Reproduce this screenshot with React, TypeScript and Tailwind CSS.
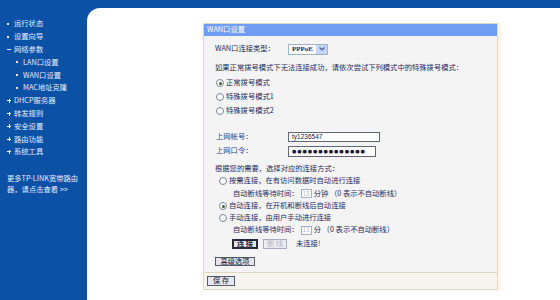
import type { ReactNode } from 'react';

const menu: { label: string; mark: 'dot' | 'minus' | 'plus'; sub?: boolean }[] = [
  { label: '运行状态', mark: 'dot' },
  { label: '设置向导', mark: 'dot' },
  { label: '网络参数', mark: 'minus' },
  { label: 'LAN口设置', mark: 'dot', sub: true },
  { label: 'WAN口设置', mark: 'dot', sub: true },
  { label: 'MAC地址克隆', mark: 'dot', sub: true },
  { label: 'DHCP服务器', mark: 'plus' },
  { label: '转发规则', mark: 'plus' },
  { label: '安全设置', mark: 'plus' },
  { label: '路由功能', mark: 'plus' },
  { label: '系统工具', mark: 'plus' },
];

function Mark({ kind }: { kind: 'dot' | 'minus' | 'plus' }) {
  if (kind === 'dot') return <span className="h-[2px] w-[2px] bg-[#dfe8ff]" />;
  if (kind === 'minus') return <span className="h-[1px] w-[4px] bg-[#dfe8ff]" />;
  return (
    <span className="relative h-[4px] w-[4px]">
      <span className="absolute left-0 top-[1.5px] h-[1px] w-[4px] bg-[#eef3ff]" />
      <span className="absolute left-[1.5px] top-0 h-[4px] w-[1px] bg-[#eef3ff]" />
    </span>
  );
}

function Sidebar() {
  return (
    <aside className="flex w-[87px] shrink-0 flex-col pt-[9.6px] text-[#e4ecff]">
      {menu.map((m) => (
        <div key={m.label} className={`flex h-[12.8px] items-center ${m.sub ? 'pl-[16px]' : 'pl-[7px]'}`}>
          <span className="flex w-[7px] items-center">
            <Mark kind={m.mark} />
          </span>
          <span>{m.label}</span>
        </div>
      ))}
      <div className="mt-[15px] pl-[7px] leading-[11px]">
        <div>更多TP-LINK宽带路由</div>
        <div>器，请点击查看 &gt;&gt;</div>
      </div>
    </aside>
  );
}

function Radio({ checked }: { checked?: boolean }) {
  return (
    <span className="mr-[2px] inline-flex h-[8px] w-[8px] shrink-0 items-center justify-center rounded-full border border-[#7b8494] bg-white">
      {checked && <span className="h-[3px] w-[3px] rounded-full bg-[#3d5a2e]" />}
    </span>
  );
}

function Btn({ children, className }: { children: ReactNode; className: string }) {
  return <span className={`inline-flex items-center justify-center ${className}`}>{children}</span>;
}

function SmallInput() {
  return (
    <span className="mx-[2px] inline-flex h-[9px] w-[11px] items-center justify-center border border-[#9fb2c8] bg-white text-[6px] text-[#b0b8c4]">
      15
    </span>
  );
}

function FormBox() {
  return (
    <div className="w-[295px] border border-[#e2d8c2] bg-[#f4f4f4] text-[#1e2a5e] shadow-[3px_0_0_#fbf6e6]">
      <div className="flex h-[12px] items-center bg-[#6f9df3] pl-[3px] text-white">WAN口设置</div>
      <div className="flex flex-col pl-[11px]">
        <div className="mt-[7px] flex h-[12px] items-center">
          <span className="w-[73px]">WAN口连接类型：</span>
          <span className="flex h-[11px] w-[40px] items-center border border-[#9fb2c8] bg-white">
            <span className="flex-1 pl-[3px] font-['Liberation_Serif',serif] text-[7px] font-bold">PPPoE</span>
            <span className="flex h-full w-[11px] items-center justify-center bg-[#c4d5fb]">
              <svg width="6" height="4" viewBox="0 0 6 4">
                <path d="M0.5 0.5 L3 3 L5.5 0.5" fill="none" stroke="#4a5f8a" strokeWidth="1.2" />
              </svg>
            </span>
          </span>
        </div>
        <div className="mt-[7px] flex h-[12px] items-center">
          如果正常拨号模式下无法连接成功，请依次尝试下列模式中的特殊拨号模式：
        </div>
        <div className="mt-[2px] flex h-[14px] items-center pl-[1px]">
          <Radio checked />
          正常拨号模式
        </div>
        <div className="flex h-[14px] items-center pl-[1px]">
          <Radio />
          特殊拨号模式1
        </div>
        <div className="flex h-[14px] items-center pl-[1px]">
          <Radio />
          特殊拨号模式2
        </div>
        <div className="mt-[13px] flex h-[12px] items-center text-[#2c3f86]">
          <span className="w-[73px] pl-[1px]">上网帐号：</span>
          <span className="flex h-[10px] w-[92px] items-center border border-[#606878] bg-white pl-[3px] font-['Liberation_Sans',sans-serif] text-[6.5px] text-[#1a1a3a]">
            ty1236547
          </span>
        </div>
        <div className="mt-[2px] flex h-[12px] items-center text-[#2c3f86]">
          <span className="w-[73px] pl-[1px]">上网口令：</span>
          <span className="flex h-[11px] w-[88px] items-center border border-[#606878] bg-white pl-[3px] font-['DejaVu_Sans',sans-serif] text-[5px] tracking-[0.9px] text-[#1a1a3a]">
            ●●●●●●●●●●●●●●
          </span>
        </div>
        <div className="mt-[6px] flex h-[12px] items-center">根据您的需要，选择对应的连接方式：</div>
        <div className="flex h-[12px] items-center pl-[4px]">
          <Radio />
          按需连接，在有访问数据时自动进行连接
        </div>
        <div className="flex h-[13px] items-center pl-[18px]">
          自动断线等待时间：
          <SmallInput />
          分钟 （0 表示不自动断线）
        </div>
        <div className="flex h-[12px] items-center pl-[4px]">
          <Radio checked />
          自动连接，在开机和断线后自动连接
        </div>
        <div className="flex h-[12px] items-center pl-[4px]">
          <Radio />
          手动连接，由用户手动进行连接
        </div>
        <div className="flex h-[12px] items-center pl-[18px]">
          自动断线等待时间：
          <SmallInput />
          分 （0 表示不自动断线）
        </div>
        <div className="mt-[3px] flex h-[10px] items-center pl-[17px]">
          <Btn className="h-[10px] w-[26px] border-2 border-[#2a2a3a] bg-[#e6e6ee] font-bold text-[#1a1a3a]">连 接</Btn>
          <Btn className="ml-[5px] h-[10px] w-[24px] border border-[#a8acc0] bg-[#ecebf2] text-[#b4b6c4]">断 线</Btn>
          <span className="ml-[9px]">未连接!</span>
        </div>
        <div className="mt-[8px] flex h-[9px] items-center">
          <Btn className="h-[9px] w-[40px] border border-[#555a6a] bg-[#e4e4ea] text-[#1a1a3a]">高级选项</Btn>
        </div>
        <div className="h-[6px]" />
      </div>
      <div className="flex h-[17px] items-center border-t border-[#e2d8c2] bg-[#f6f4ef] pl-[3px]">
        <Btn className="h-[10px] w-[28px] border border-[#555a6a] bg-[#e6e6ee] text-[#1a1a3a]">保 存</Btn>
      </div>
    </div>
  );
}

export default function App() {
  return (
    <div className="flex h-[300px] w-[560px] flex-col overflow-hidden bg-[#0b51a5] font-['Noto_Sans_CJK_SC',sans-serif] text-[7.3px] leading-none">
      <div className="h-[8px] shrink-0" />
      <div className="flex flex-1">
        <Sidebar />
        <main className="flex-1 rounded-tl-[13px] bg-white pl-[116px] pt-[15px]">
          <FormBox />
        </main>
      </div>
    </div>
  );
}
